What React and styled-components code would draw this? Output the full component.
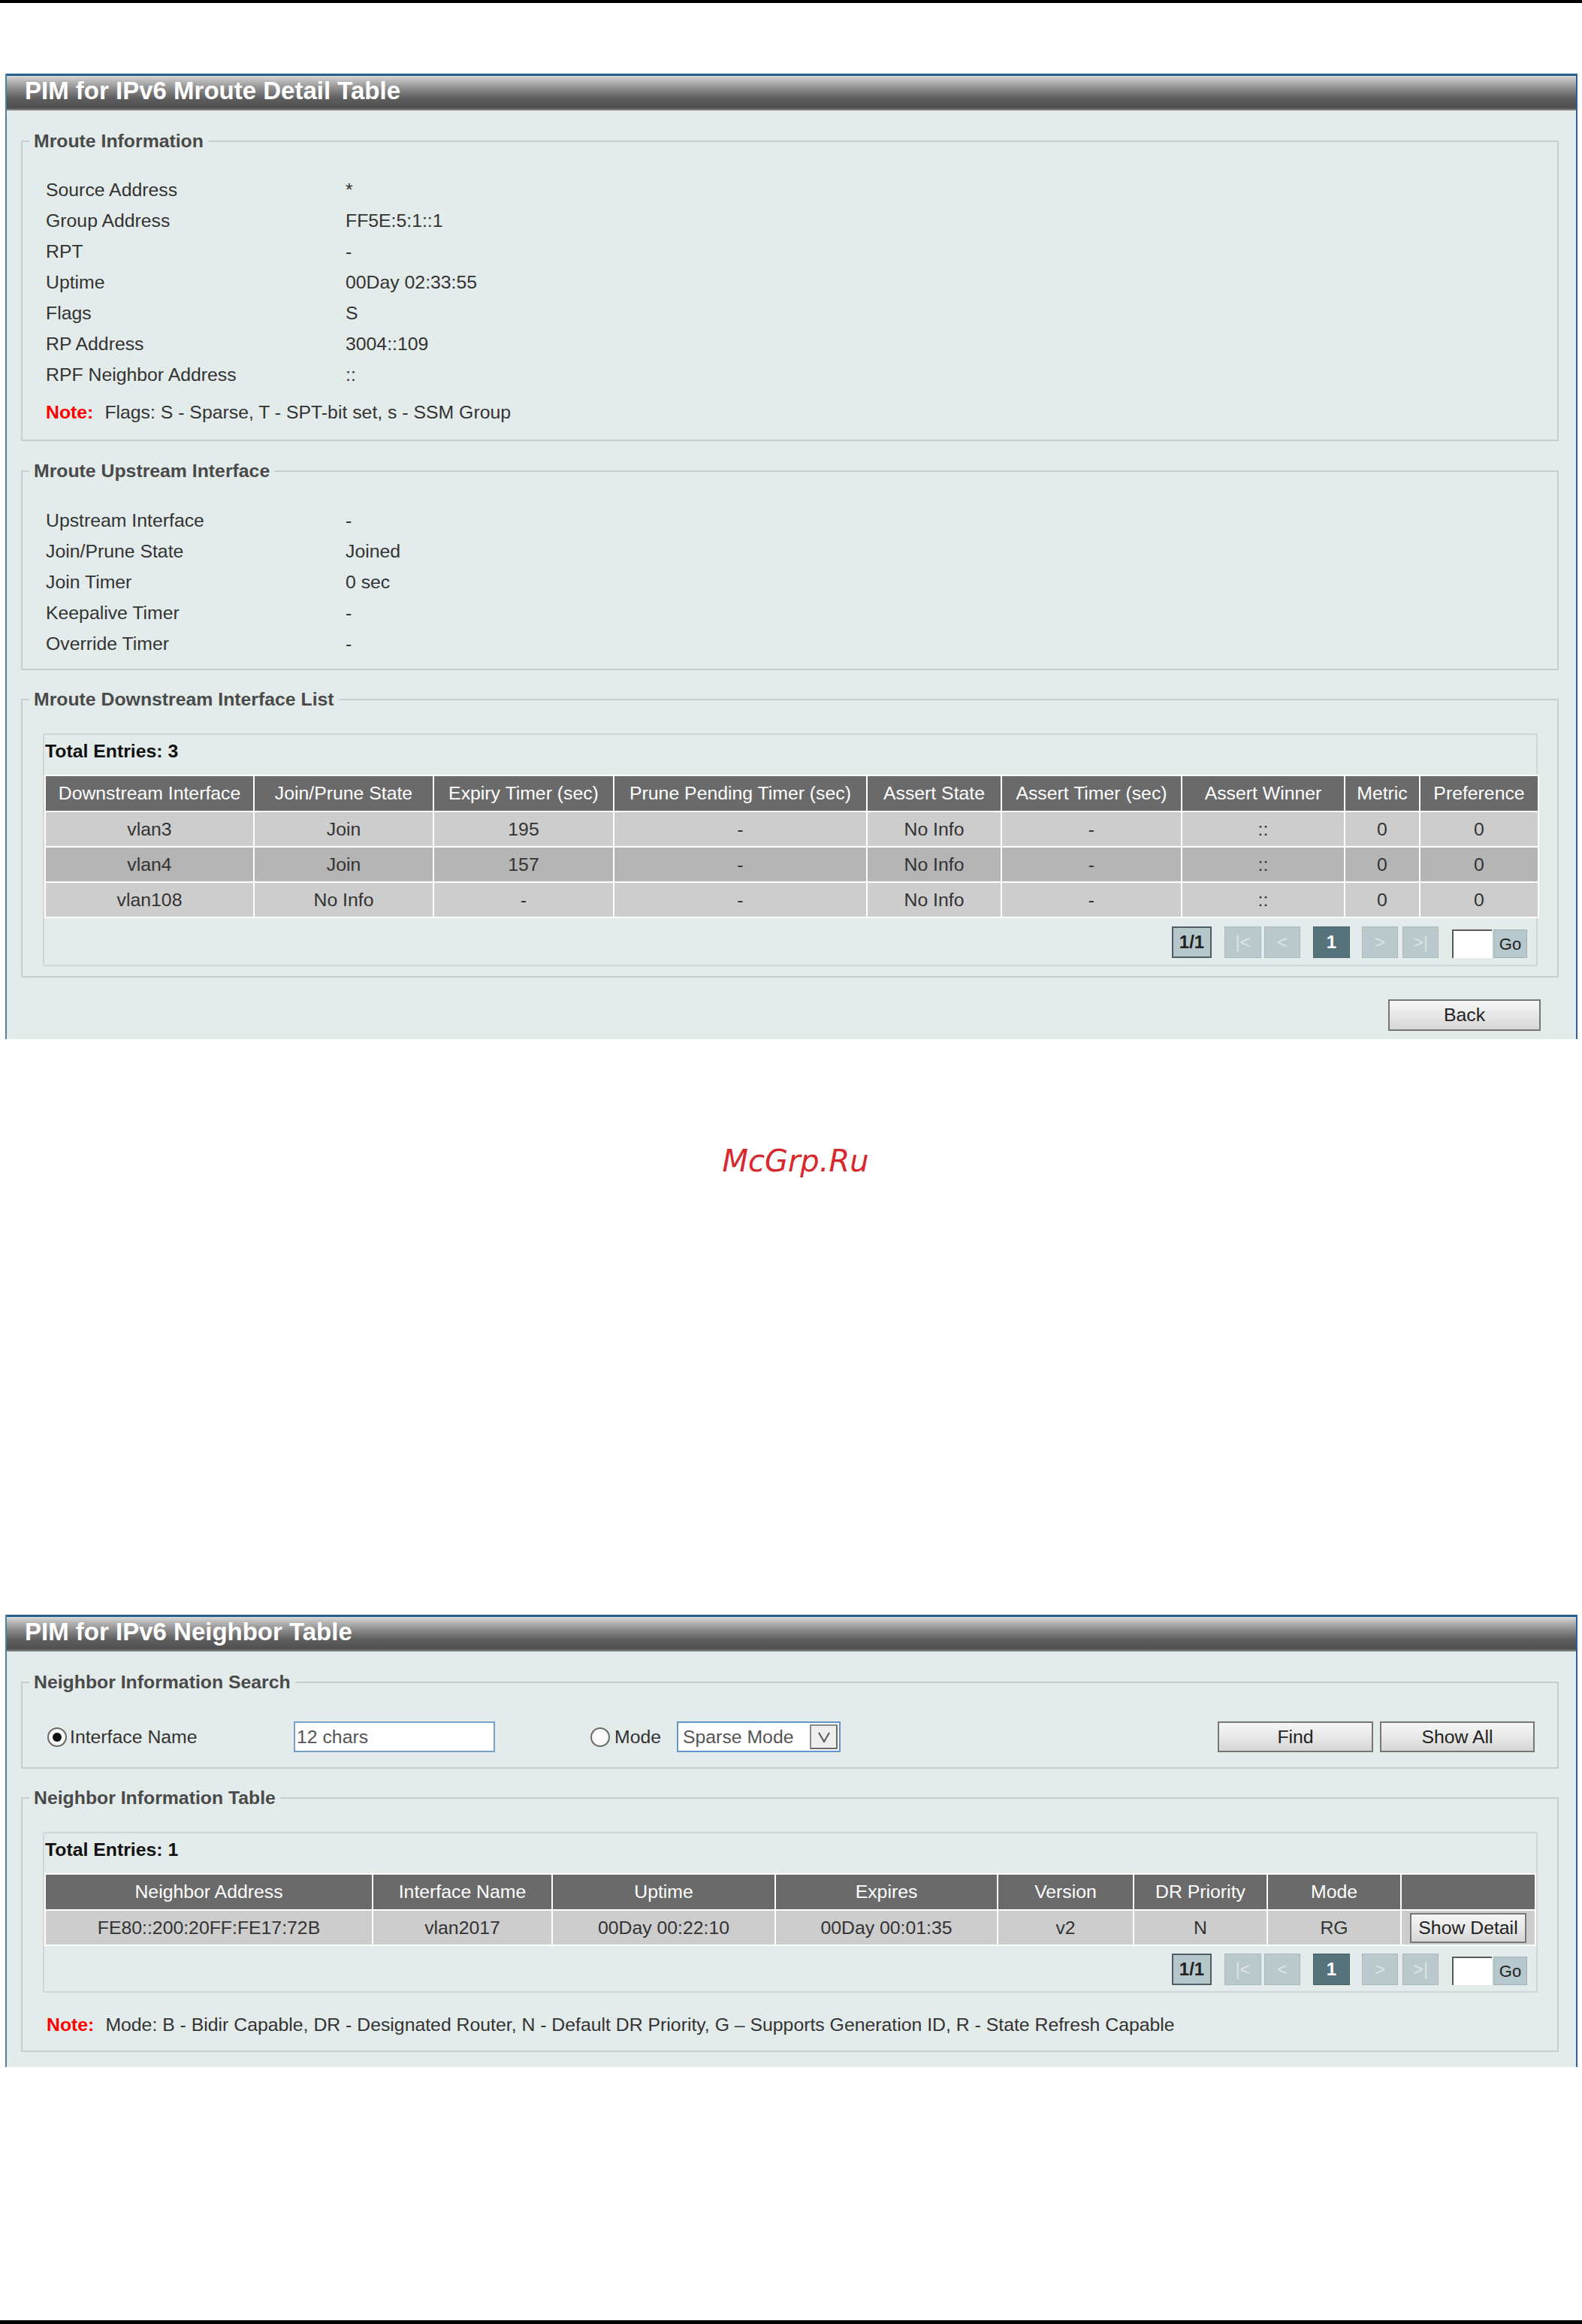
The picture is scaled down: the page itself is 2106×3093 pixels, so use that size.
import React from 'react'
import styled, { createGlobalStyle } from 'styled-components'

const GlobalStyle = createGlobalStyle`
  html, body {
    margin: 0;
    padding: 0;
    background: #ffffff;
  }
  body {
    font-family: "Liberation Sans", Arial, sans-serif;
    color: #333333;
  }
  * {
    box-sizing: border-box;
  }
`

const FONT = 24.8

const Page = styled.div`
  width: 2106px;
  height: 3093px;
  display: flex;
  flex-direction: column;
`

const Rule = styled.div`
  flex: none;
  height: ${p => p.h}px;
  background: #000000;
  margin-top: ${p => (p.bottom ? 'auto' : '0')};
`

const Panel = styled.section`
  flex: none;
  margin: ${p => p.top}px 0 0 7px;
  width: 2093px;
  background: #e3ebeb;
  border-left: 2px solid #52809f;
  border-right: 2px solid #2a6496;
`

const TitleBar = styled.div`
  height: 49px;
  border-top: 3px solid #255f90;
  background: linear-gradient(
    to bottom,
    #d9d9d9 0%,
    #b9b9b9 14%,
    #8b8b8b 38%,
    #5d5d5d 66%,
    #4f4f4f 92%,
    #8c8c8c 100%
  );
  padding-left: 24px;
  color: #ffffff;
  font-weight: bold;
  font-size: 33px;
  line-height: 40px;
  white-space: nowrap;
`

const Body = styled.div`
  padding: 27px 23px ${p => p.pb}px 19px;
`

const Fieldset = styled.fieldset`
  margin: ${p => p.mt || 0}px 0 0;
  padding: 0;
  border: 2px solid #c3d0d2;
  min-width: 0;
`

const Legend = styled.legend`
  margin-left: 9px;
  padding: 0 6px;
  font-weight: bold;
  font-size: ${FONT}px;
  line-height: 28px;
  color: #4a4a4a;
`

const FieldBody = styled.div`
  padding: ${p => p.pt}px 0 ${p => p.pb}px 0;
`

const InfoList = styled.div`
  padding-left: 31px;
`

const InfoRow = styled.div`
  display: grid;
  grid-template-columns: 399px 1fr;
  height: 41px;
  line-height: 41px;
  font-size: ${FONT}px;
  color: #333333;
`

const Note = styled.div`
  margin-top: ${p => p.mt}px;
  padding-left: ${p => p.pl}px;
  font-size: ${FONT}px;
  line-height: 41px;
  color: #333333;
  white-space: nowrap;
`

const NoteTag = styled.span`
  color: #ff0000;
  font-weight: bold;
  margin-right: 15px;
`

const TableBox = styled.div`
  margin: 0 26px 0 27px;
  border: 2px solid #d2d6d6;
`

const Total = styled.div`
  height: 53px;
  line-height: 44px;
  padding-left: 1px;
  font-weight: bold;
  font-size: ${FONT}px;
  color: #111111;
`

const DataTable = styled.table`
  width: 100%;
  border-collapse: collapse;
  table-layout: fixed;
  font-size: ${FONT}px;
`

const Th = styled.th`
  height: 48px;
  padding: 0;
  background: #6a6a6a;
  color: #ffffff;
  font-weight: normal;
  border: 2px solid #ffffff;
  white-space: nowrap;
`

const Td = styled.td`
  height: 47px;
  padding: 0;
  background: ${p => (p.alt ? '#b5b5b5' : '#cdcdcd')};
  color: #333333;
  text-align: center;
  border: 2px solid #ffffff;
  white-space: nowrap;
`

const Pager = styled.div`
  display: flex;
  justify-content: flex-end;
  align-items: flex-end;
  padding: ${p => p.pt}px 12px ${p => p.pb}px;
`

const PageInfo = styled.div`
  width: 53px;
  height: 42px;
  line-height: 38px;
  text-align: center;
  background: #b6c7cb;
  border: 2px solid #4e5e62;
  font-weight: bold;
  font-size: 24px;
  color: #222222;
`

const PageBtn = styled.div`
  width: ${p => p.w}px;
  height: 42px;
  margin-left: ${p => p.ml}px;
  line-height: 40px;
  text-align: center;
  font-size: 24px;
  background: ${p => (p.current ? '#56727a' : '#bac9cc')};
  border: 1px solid ${p => (p.current ? '#48636a' : '#a9b9bc')};
  color: ${p => (p.current ? '#ffffff' : '#dce5e7')};
  font-weight: ${p => (p.current ? 'bold' : 'normal')};
`

const GoInput = styled.div`
  width: 53px;
  height: 38px;
  margin-left: 18px;
  background: #ffffff;
  border-top: 2px solid #5a5a5a;
  border-left: 2px solid #5a5a5a;
`

const GoBtn = styled.div`
  width: 45px;
  height: 38px;
  margin-left: 2px;
  line-height: 38px;
  text-align: center;
  background: #b7c8cc;
  border: 1px solid #a0b1b5;
  font-size: 22px;
  color: #222222;
`

const Button = styled.button`
  flex: none;
  width: ${p => p.w}px;
  height: ${p => p.h || 42}px;
  margin-left: ${p => p.ml || 0}px;
  padding: 0;
  font-family: "Liberation Sans", Arial, sans-serif;
  font-size: ${FONT}px;
  color: #222222;
  background: linear-gradient(to bottom, #f6f6f6 0%, #e6e6e6 55%, #d6d6d6 100%);
  border: 2px solid #777777;
  border-radius: 0;
`

const Actions = styled.div`
  display: flex;
  justify-content: flex-end;
  margin-top: 29px;
  padding-right: 24px;
`

const SearchRow = styled.div`
  display: flex;
  align-items: center;
  padding: 38px 30px 20px 33px;
  font-size: ${FONT}px;
`

const Choice = styled.label`
  flex: none;
  display: flex;
  align-items: center;
  width: ${p => p.w}px;
  margin-left: ${p => p.ml || 0}px;
  height: 41px;
  color: #333333;
`

const Radio = styled.span`
  flex: none;
  width: 26px;
  height: 26px;
  margin-right: ${p => p.mr}px;
  border-radius: 50%;
  border: 2px solid #6a6a6a;
  background: radial-gradient(circle, #ffffff 0%, #f0f0f0 100%);
  display: flex;
  align-items: center;
  justify-content: center;
  &::after {
    content: '';
    display: ${p => (p.checked ? 'block' : 'none')};
    width: 12px;
    height: 12px;
    border-radius: 50%;
    background: #111111;
  }
`

const TextBox = styled.div`
  flex: none;
  width: 268px;
  height: 41px;
  padding-left: 2px;
  line-height: 37px;
  background: #ffffff;
  border: 2px solid #76a0cc;
  color: #555555;
`

const SelectBox = styled.div`
  flex: none;
  display: flex;
  align-items: center;
  justify-content: space-between;
  width: 218px;
  height: 41px;
  padding: 0 2px 0 6px;
  background: #ffffff;
  border: 2px solid #6194cb;
  color: #555555;
`

const Arrow = styled.span`
  width: 37px;
  height: 33px;
  display: flex;
  align-items: center;
  justify-content: center;
  background: #eeeeee;
  border: 2px solid #8a8a8a;
  border-right-color: #6a6a6a;
  border-bottom-color: #6a6a6a;
`

const Spacer = styled.div`
  flex: 1;
`

const Watermark = styled.div`
  flex: none;
  margin-top: ${p => p.top}px;
  padding-left: 12px;
  text-align: center;
  font-family: "DejaVu Sans", sans-serif;
  font-style: italic;
  font-size: 40px;
  line-height: 48px;
  color: #d8272d;
`

const mrouteInfo = [
  ['Source Address', '*'],
  ['Group Address', 'FF5E:5:1::1'],
  ['RPT', '-'],
  ['Uptime', '00Day 02:33:55'],
  ['Flags', 'S'],
  ['RP Address', '3004::109'],
  ['RPF Neighbor Address', '::'],
]

const upstreamInfo = [
  ['Upstream Interface', '-'],
  ['Join/Prune State', 'Joined'],
  ['Join Timer', '0 sec'],
  ['Keepalive Timer', '-'],
  ['Override Timer', '-'],
]

const downCols = [
  ['Downstream Interface', 278],
  ['Join/Prune State', 239],
  ['Expiry Timer (sec)', 240],
  ['Prune Pending Timer (sec)', 337],
  ['Assert State', 179],
  ['Assert Timer (sec)', 240],
  ['Assert Winner', 217],
  ['Metric', 100],
  ['Preference', 158],
]

const downRows = [
  ['vlan3', 'Join', '195', '-', 'No Info', '-', '::', '0', '0'],
  ['vlan4', 'Join', '157', '-', 'No Info', '-', '::', '0', '0'],
  ['vlan108', 'No Info', '-', '-', 'No Info', '-', '::', '0', '0'],
]

const neighborCols = [
  ['Neighbor Address', 436],
  ['Interface Name', 239],
  ['Uptime', 297],
  ['Expires', 296],
  ['Version', 181],
  ['DR Priority', 178],
  ['Mode', 178],
  ['', 179],
]

const neighborRows = [
  ['FE80::200:20FF:FE17:72B', 'vlan2017', '00Day 00:22:10', '00Day 00:01:35', 'v2', 'N', 'RG'],
]

const Pagination = ({ pt, pb }) => (
  <Pager pt={pt} pb={pb}>
    <PageInfo>1/1</PageInfo>
    <PageBtn w={49} ml={17}>|&lt;</PageBtn>
    <PageBtn w={48} ml={4}>&lt;</PageBtn>
    <PageBtn w={49} ml={17} current>1</PageBtn>
    <PageBtn w={48} ml={16}>&gt;</PageBtn>
    <PageBtn w={48} ml={6}>&gt;|</PageBtn>
    <GoInput />
    <GoBtn>Go</GoBtn>
  </Pager>
)

const Cols = ({ cols }) => (
  <colgroup>
    {cols.map(([name, w], i) => (
      <col key={i} style={{ width: w }} />
    ))}
  </colgroup>
)

const App = () => {
  return (
    <Page>
      <GlobalStyle />
      <Rule h={4} />

      <Panel top={94}>
        <TitleBar>PIM for IPv6 Mroute Detail Table</TitleBar>
        <Body pb={11}>
          <Fieldset>
            <Legend>Mroute Information</Legend>
            <FieldBody pt={30} pb={16}>
              <InfoList>
                {mrouteInfo.map(([k, v]) => (
                  <InfoRow key={k}>
                    <span>{k}</span>
                    <span>{v}</span>
                  </InfoRow>
                ))}
              </InfoList>
              <Note mt={9} pl={31}>
                <NoteTag>Note:</NoteTag>Flags: S - Sparse, T - SPT-bit set, s - SSM Group
              </Note>
            </FieldBody>
          </Fieldset>

          <Fieldset mt={26}>
            <Legend>Mroute Upstream Interface</Legend>
            <FieldBody pt={31} pb={13}>
              <InfoList>
                {upstreamInfo.map(([k, v]) => (
                  <InfoRow key={k}>
                    <span>{k}</span>
                    <span>{v}</span>
                  </InfoRow>
                ))}
              </InfoList>
            </FieldBody>
          </Fieldset>

          <Fieldset mt={25}>
            <Legend>Mroute Downstream Interface List</Legend>
            <FieldBody pt={31} pb={13}>
              <TableBox>
                <Total>Total Entries: 3</Total>
                <DataTable>
                  <Cols cols={downCols} />
                  <thead>
                    <tr>
                      {downCols.map(([name]) => (
                        <Th key={name}>{name}</Th>
                      ))}
                    </tr>
                  </thead>
                  <tbody>
                    {downRows.map((row, r) => (
                      <tr key={r}>
                        {row.map((c, i) => (
                          <Td key={i} alt={r % 2 === 1}>{c}</Td>
                        ))}
                      </tr>
                    ))}
                  </tbody>
                </DataTable>
                <Pagination pt={11} pb={9} />
              </TableBox>
            </FieldBody>
          </Fieldset>

          <Actions>
            <Button w={203}>Back</Button>
          </Actions>
        </Body>
      </Panel>

      <Watermark top={138}>McGrp.Ru</Watermark>

      <Panel top={580}>
        <TitleBar>PIM for IPv6 Neighbor Table</TitleBar>
        <Body pb={20}>
          <Fieldset>
            <Legend>Neighbor Information Search</Legend>
            <SearchRow>
              <Choice w={328}>
                <Radio checked mr={4} />
                Interface Name
              </Choice>
              <TextBox>12 chars</TextBox>
              <Choice w={115} ml={127}>
                <Radio mr={6} />
                Mode
              </Choice>
              <SelectBox>
                Sparse Mode
                <Arrow>
                  <svg width="20" height="18" viewBox="0 0 20 18">
                    <polyline points="3,3 10,15 17,3" fill="none" stroke="#555" strokeWidth="2" />
                  </svg>
                </Arrow>
              </SelectBox>
              <Spacer />
              <Button w={207} h={41}>Find</Button>
              <Button w={206} h={41} ml={9}>Show All</Button>
            </SearchRow>
          </Fieldset>

          <Fieldset mt={25}>
            <Legend>Neighbor Information Table</Legend>
            <FieldBody pt={31} pb={14}>
              <TableBox>
                <Total>Total Entries: 1</Total>
                <DataTable>
                  <Cols cols={neighborCols} />
                  <thead>
                    <tr>
                      {neighborCols.map(([name], i) => (
                        <Th key={i}>{name}</Th>
                      ))}
                    </tr>
                  </thead>
                  <tbody>
                    {neighborRows.map((row, r) => (
                      <tr key={r}>
                        {row.map((c, i) => (
                          <Td key={i}>{c}</Td>
                        ))}
                        <Td>
                          <Button w={155} h={40}>Show Detail</Button>
                        </Td>
                      </tr>
                    ))}
                  </tbody>
                </DataTable>
                <Pagination pt={10} pb={8} />
              </TableBox>
              <Note mt={22} pl={32}>
                <NoteTag>Note:</NoteTag>Mode: B - Bidir Capable, DR - Designated Router, N - Default DR Priority, G – Supports Generation ID, R - State Refresh Capable
              </Note>
            </FieldBody>
          </Fieldset>
        </Body>
      </Panel>

      <Rule h={5} bottom />
    </Page>
  )
}

export default App
